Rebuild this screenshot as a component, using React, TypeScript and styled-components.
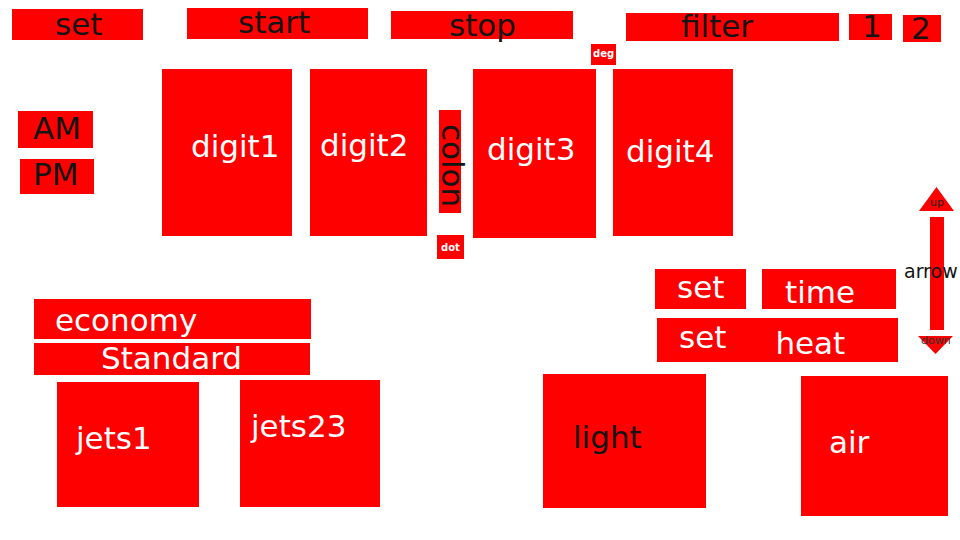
import styled, { createGlobalStyle } from 'styled-components';

const GlobalStyle = createGlobalStyle`
  html,
  body {
    margin: 0;
    padding: 0;
    background: #fff;
  }

  body {
    font-family: 'DejaVu Sans', Verdana, sans-serif;
  }
`;

const Canvas = styled.div`
  position: relative;
  width: 960px;
  height: 540px;
  overflow: hidden;
  background: #fff;
`;

type ZoneProps = {
  $x: number;
  $y: number;
  $w: number;
  $h: number;
};

// one red hotspot on the panel map
const Zone = styled.div<ZoneProps>`
  position: absolute;
  left: ${(p) => p.$x}px;
  top: ${(p) => p.$y}px;
  width: ${(p) => p.$w}px;
  height: ${(p) => p.$h}px;
  display: flex;
  align-items: flex-start;
  background: #fe0000;
`;

type LabelProps = {
  $ml: number;
  $mt: number;
  $light?: boolean;
  $size?: number;
  $bold?: boolean;
  $vertical?: boolean;
};

const Label = styled.span<LabelProps>`
  flex-shrink: 0;
  margin-left: ${(p) => p.$ml}px;
  margin-top: ${(p) => p.$mt}px;
  font-size: ${(p) => p.$size ?? 31}px;
  font-weight: ${(p) => (p.$bold ? 700 : 400)};
  line-height: 1;
  color: ${(p) => (p.$light ? '#fff' : '#141414')};
  white-space: nowrap;
  ${(p) => p.$vertical && 'writing-mode: vertical-rl;'}
`;

const ArrowBox = styled.svg`
  position: absolute;
  left: 900px;
  top: 185px;
  width: 60px;
  height: 172px;
  overflow: visible;
  font-family: 'DejaVu Sans', Verdana, sans-serif;
`;

type LabelDef = {
  text: string;
  ml: number;
  mt: number;
  light?: boolean;
  size?: number;
  bold?: boolean;
  vertical?: boolean;
};

type ZoneDef = {
  id: string;
  x: number;
  y: number;
  w: number;
  h: number;
  labels: LabelDef[];
};

const zones: ZoneDef[] = [
  { id: 'set', x: 12, y: 9, w: 131, h: 31, labels: [{ text: 'set', ml: 43, mt: 0 }] },
  { id: 'start', x: 187, y: 8, w: 181, h: 31, labels: [{ text: 'start', ml: 51, mt: -1 }] },
  { id: 'stop', x: 391, y: 11, w: 182, h: 28, labels: [{ text: 'stop', ml: 58, mt: -1 }] },
  { id: 'filter', x: 626, y: 13, w: 213, h: 28, labels: [{ text: 'filter', ml: 55, mt: -2 }] },
  { id: 'one', x: 849, y: 14, w: 43, h: 26, labels: [{ text: '1', ml: 13, mt: -3 }] },
  { id: 'two', x: 903, y: 15, w: 38, h: 27, labels: [{ text: '2', ml: 8, mt: -2 }] },
  {
    id: 'deg',
    x: 591,
    y: 44,
    w: 25,
    h: 21,
    labels: [{ text: 'deg', ml: 2, mt: 5, light: true, size: 10, bold: true }],
  },
  { id: 'am', x: 18, y: 111, w: 75, h: 37, labels: [{ text: 'AM', ml: 15, mt: 2 }] },
  { id: 'pm', x: 20, y: 159, w: 74, h: 35, labels: [{ text: 'PM', ml: 13, mt: 0 }] },
  { id: 'digit1', x: 162, y: 69, w: 130, h: 167, labels: [{ text: 'digit1', ml: 29, mt: 62, light: true }] },
  { id: 'digit2', x: 310, y: 69, w: 117, h: 167, labels: [{ text: 'digit2', ml: 10, mt: 61, light: true }] },
  {
    id: 'colon',
    x: 439,
    y: 110,
    w: 22,
    h: 103,
    labels: [{ text: 'colon', ml: -2, mt: 14, vertical: true }],
  },
  {
    id: 'dot',
    x: 437,
    y: 235,
    w: 27,
    h: 24,
    labels: [{ text: 'dot', ml: 4, mt: 8, light: true, size: 10, bold: true }],
  },
  { id: 'digit3', x: 473, y: 69, w: 123, h: 169, labels: [{ text: 'digit3', ml: 14, mt: 65, light: true }] },
  { id: 'digit4', x: 613, y: 69, w: 120, h: 167, labels: [{ text: 'digit4', ml: 13, mt: 67, light: true }] },
  { id: 'setTime', x: 655, y: 269, w: 91, h: 40, labels: [{ text: 'set', ml: 22, mt: 3, light: true }] },
  { id: 'time', x: 762, y: 269, w: 134, h: 40, labels: [{ text: 'time', ml: 23, mt: 8, light: true }] },
  {
    id: 'setHeat',
    x: 657,
    y: 318,
    w: 241,
    h: 44,
    labels: [
      { text: 'set', ml: 22, mt: 4, light: true },
      { text: 'heat', ml: 49, mt: 10, light: true },
    ],
  },
  { id: 'economy', x: 34, y: 299, w: 277, h: 40, labels: [{ text: 'economy', ml: 21, mt: 6, light: true }] },
  { id: 'standard', x: 34, y: 343, w: 276, h: 32, labels: [{ text: 'Standard', ml: 67, mt: 0, light: true }] },
  { id: 'jets1', x: 57, y: 382, w: 142, h: 125, labels: [{ text: 'jets1', ml: 19, mt: 41, light: true }] },
  { id: 'jets23', x: 240, y: 380, w: 140, h: 127, labels: [{ text: 'jets23', ml: 11, mt: 31, light: true }] },
  { id: 'light', x: 543, y: 374, w: 163, h: 134, labels: [{ text: 'light', ml: 30, mt: 48 }] },
  { id: 'air', x: 801, y: 376, w: 147, h: 140, labels: [{ text: 'air', ml: 28, mt: 51, light: true }] },
];

const Arrow = () => (
  <ArrowBox viewBox="0 0 60 172">
    <polygon points="36.5,2 19,26 54,26" fill="#fe0000" />
    <rect x="30" y="32" width="14" height="113" fill="#fe0000" />
    <polygon points="18,151 53,151 35.5,169" fill="#fe0000" />
    <text x="30" y="21" fontSize="11" fill="#222">
      up
    </text>
    <text x="4" y="93" fontSize="19" fill="#141414">
      arrow
    </text>
    <text x="21" y="159" fontSize="11" fill="#333">
      down
    </text>
  </ArrowBox>
);

const App = () => {
  return (
    <>
      <GlobalStyle />
      <Canvas>
        {zones.map((zone) => (
          <Zone key={zone.id} $x={zone.x} $y={zone.y} $w={zone.w} $h={zone.h}>
            {zone.labels.map((label) => (
              <Label
                key={label.text}
                $ml={label.ml}
                $mt={label.mt}
                $light={label.light}
                $size={label.size}
                $bold={label.bold}
                $vertical={label.vertical}
              >
                {label.text}
              </Label>
            ))}
          </Zone>
        ))}
        <Arrow />
      </Canvas>
    </>
  );
};

export default App;
